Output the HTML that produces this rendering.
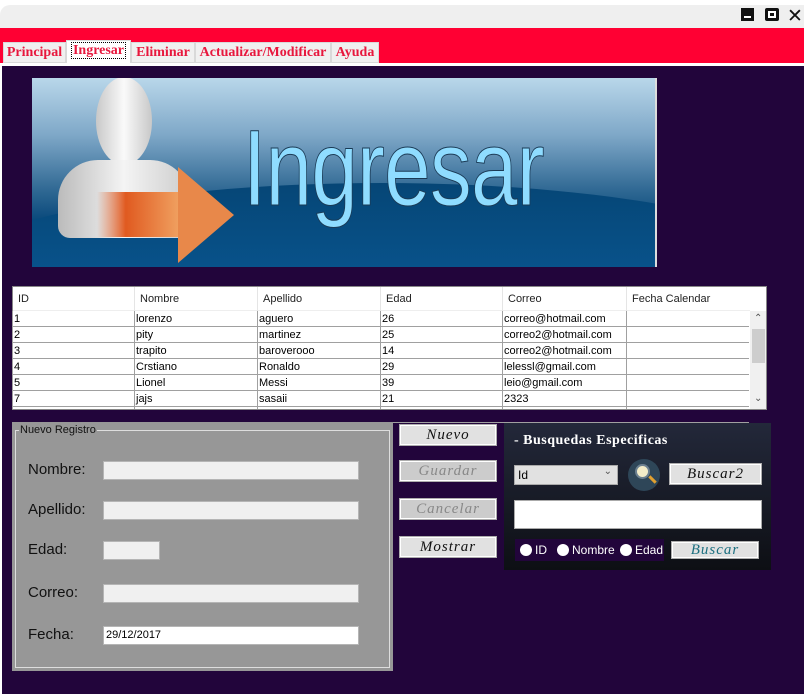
<!DOCTYPE html>
<html><head><meta charset="utf-8"><style>
*{margin:0;padding:0;box-sizing:border-box}
body{width:804px;height:694px;background:#fff;position:relative;overflow:hidden;font-family:"Liberation Sans",sans-serif}
.a{position:absolute}
.tab{position:absolute;top:42px;height:21px;background:#f0f0f0;border:1px solid #d9d9d9;color:#e8173d;font:bold 14px "Liberation Serif",serif;text-align:center;line-height:20px}
.cell{position:absolute;font-size:11px;color:#000;white-space:nowrap}
.btn{position:absolute;width:98px;height:22px;background:#e1e1e1;border:1px solid #adadad;box-shadow:inset 0 0 0 1px #fff;font:italic 15px "Liberation Serif",serif;text-align:center;line-height:20px;color:#111;letter-spacing:1px}
.lbl{position:absolute;left:28px;font-size:15px;color:#111}
.inp{position:absolute;left:103px;height:19px;background:#f0f0f0;border:1px solid #b5b5b5}
</style></head><body>
<div class="a" style="left:0;top:5px;width:804px;height:24px;background:#efefef;border-radius:10px 0 0 0"></div>
<div class="a" style="left:741px;top:8px;width:13px;height:13px;background:#111"></div>
<div class="a" style="left:744px;top:16px;width:7px;height:2px;background:#fff"></div>
<div class="a" style="left:765px;top:8px;width:14px;height:13px;background:#111;border-radius:2px"></div>
<div class="a" style="left:768px;top:11px;width:8px;height:7px;border:2px solid #fff"></div>
<div class="a" style="left:787px;top:5px;font:bold 19px 'DejaVu Sans',sans-serif;color:#111">✕</div>
<div class="a" style="left:0;top:28px;width:804px;height:35px;background:#ff0033"></div>
<div class="tab" style="left:3px;width:63px">Principal</div>
<div class="tab" style="left:66px;top:40px;height:24px;width:65px;background:#fff"><span style="border:1px dotted #000;padding:0 1px">Ingresar</span></div>
<div class="tab" style="left:131px;width:64px">Eliminar</div>
<div class="tab" style="left:195px;width:136px">Actualizar/Modificar</div>
<div class="tab" style="left:331px;width:48px">Ayuda</div>
<div class="a" style="left:0;top:63px;width:804px;height:4px;background:#fff"></div>
<div class="a" style="left:2px;top:66px;width:802px;height:628px;background:#22053b"></div>
<!-- banner -->
<div class="a" style="left:32px;top:78px;width:625px;height:189px;overflow:hidden;background:linear-gradient(#b9d7ea 0%,#7fa8c8 30%,#2e6792 60%,#0a4a7c 75%,#0b5da0 100%);border-right:2px solid #ddd">
 <div class="a" style="left:-100px;top:105px;width:900px;height:200px;border-radius:50%;background:linear-gradient(#064676,#0a62a5)"></div>
 <div class="a" style="left:64px;top:-1px;width:56px;height:88px;border-radius:50%;background:linear-gradient(90deg,#c8c8c8,#fafafa,#c8c8c8)"></div>
 <div class="a" style="left:26px;top:82px;width:132px;height:78px;border-radius:40px 40px 12px 12px;background:linear-gradient(90deg,#bbb,#f4f4f4,#ccc)"></div>
 <div class="a" style="left:65px;top:114px;width:82px;height:45px;background:linear-gradient(90deg,rgba(230,90,30,0),#e05a20 35%,#f0a060)"></div>
 <div class="a" style="left:146px;top:89px;width:0;height:0;border-top:48px solid transparent;border-bottom:48px solid transparent;border-left:56px solid #e8884a"></div>
 <div class="a" style="left:211px;top:27px;font:108px 'Liberation Sans',sans-serif;color:#8fdcff;transform:scaleX(.775);transform-origin:0 0;-webkit-text-stroke:1px #1a3a55;letter-spacing:-1px">Ingresar</div>
</div>
<!-- table -->
<div class="a" style="left:12px;top:286px;width:755px;height:124px;background:#fff;border:1px solid #888;overflow:hidden">
 <div class="a" style="left:0;top:0;width:737px;height:24px;background:#fff;border-bottom:1px solid #eee"></div>
 <div class="a" style="left:737px;top:24px;width:17px;height:100px;background:#f0f0f0"></div>
 <div class="a" style="left:739px;top:42px;width:13px;height:34px;background:#cdcdcd"></div>
 <div class="a" style="left:741px;top:26px;font-size:10px;color:#555">⌃</div>
 <div class="a" style="left:741px;top:106px;font-size:10px;color:#555">⌄</div>
</div>
<div id="tb"></div>
<script>
var cols=[12,134,257,380,502,626,748],hd=["ID","Nombre","Apellido","Edad","Correo","Fecha Calendar"];
var rows=[["1","lorenzo","aguero","26","correo@hotmail.com",""],["2","pity","martinez","25","correo2@hotmail.com",""],["3","trapito","baroverooo","14","correo2@hotmail.com",""],["4","Crstiano","Ronaldo","29","lelessl@gmail.com",""],["5","Lionel","Messi","39","leio@gmail.com",""],["7","jajs","sasaii","21","2323",""]];
var h="";
for(var i=0;i<6;i++){h+='<div class="cell" style="left:'+(cols[i]+6)+'px;top:293px;color:#222">'+hd[i]+'</div>';
 if(i>0)h+='<div class="a" style="left:'+cols[i]+'px;top:287px;width:1px;height:24px;background:#e5e5e5"></div>';
 h+='<div class="a" style="left:'+cols[i]+'px;top:311px;width:1px;height:98px;background:#a0a0a0"></div>';}
for(var r=0;r<7;r++){var y=311+r*16;h+='<div class="a" style="left:13px;top:'+(y+15)+'px;width:736px;height:1px;background:#a0a0a0"></div>';
 if(r<6)for(var c=0;c<6;c++)h+='<div class="cell" style="left:'+(cols[c]+2)+'px;top:'+(y+2)+'px">'+rows[r][c]+'</div>';}
document.getElementById("tb").innerHTML=h;
</script>
<!-- form -->
<div class="a" style="left:12px;top:422px;width:381px;height:249px;background:#979797"></div>
<div class="a" style="left:15px;top:430px;width:375px;height:238px;border:1px solid #ddd"></div>
<div class="a" style="left:19px;top:424px;font-size:11px;color:#111;background:#979797;padding:0 1px">Nuevo Registro</div>
<div class="lbl" style="top:461px">Nombre:</div><div class="inp" style="top:461px;width:256px"></div>
<div class="lbl" style="top:501px">Apellido:</div><div class="inp" style="top:501px;width:256px"></div>
<div class="lbl" style="top:541px">Edad:</div><div class="inp" style="top:541px;width:57px"></div>
<div class="lbl" style="top:584px">Correo:</div><div class="inp" style="top:584px;width:256px"></div>
<div class="lbl" style="top:626px">Fecha:</div><div class="inp" style="top:626px;width:256px;background:#fff;font-size:11px;padding:2px 2px">29/12/2017</div>
<!-- buttons -->
<div class="btn" style="left:399px;top:424px">Nuevo</div>
<div class="btn" style="left:399px;top:460px;background:#ccc;color:#888">Guardar</div>
<div class="btn" style="left:399px;top:498px;background:#ccc;color:#888">Cancelar</div>
<div class="btn" style="left:399px;top:536px">Mostrar</div>
<!-- search -->
<div class="a" style="left:504px;top:423px;width:267px;height:147px;background:linear-gradient(#23283a,#0d0f14)"></div>
<div class="a" style="left:514px;top:433px;font:bold 14px 'Liberation Serif',serif;color:#fff;letter-spacing:.5px">- Busquedas Especificas</div>
<div class="a" style="left:514px;top:465px;width:104px;height:20px;background:#e1e1e1;border:1px solid #aaa;font-size:12px;padding:2px 3px">Id<span style="position:absolute;right:5px;top:0;font-size:10px;color:#555">⌄</span></div>
<div class="a" style="left:628px;top:459px;width:32px;height:32px;border-radius:50%;background:#2e4658"></div>
<div class="a" style="left:635px;top:464px;width:15px;height:15px;border-radius:50%;background:#f2ecc8;border:2px solid #6b8090"></div>
<div class="a" style="left:648px;top:478px;width:9px;height:3px;background:#e0a030;transform:rotate(45deg)"></div>
<div class="btn" style="left:669px;top:463px;width:93px">Buscar2</div>
<div class="a" style="left:514px;top:500px;width:248px;height:29px;background:#fff;border:1px solid #aaa"></div>
<div class="a" style="left:515px;top:539px;width:149px;height:22px;background:#22053b"></div>
<div id="rb"></div>
<script>
var r=[[520,"ID"],[557,"Nombre"],[620,"Edad"]],s="";
r.forEach(function(x){s+='<div class="a" style="left:'+x[0]+'px;top:544px;width:12px;height:12px;border-radius:50%;background:#fff"></div><div class="a" style="left:'+(x[0]+15)+'px;top:543px;font-size:12px;color:#fff">'+x[1]+'</div>';});
document.getElementById("rb").innerHTML=s;
</script>
<div class="btn" style="left:671px;top:541px;width:88px;height:18px;line-height:16px;color:#1b6f80">Buscar</div>
</body></html>
